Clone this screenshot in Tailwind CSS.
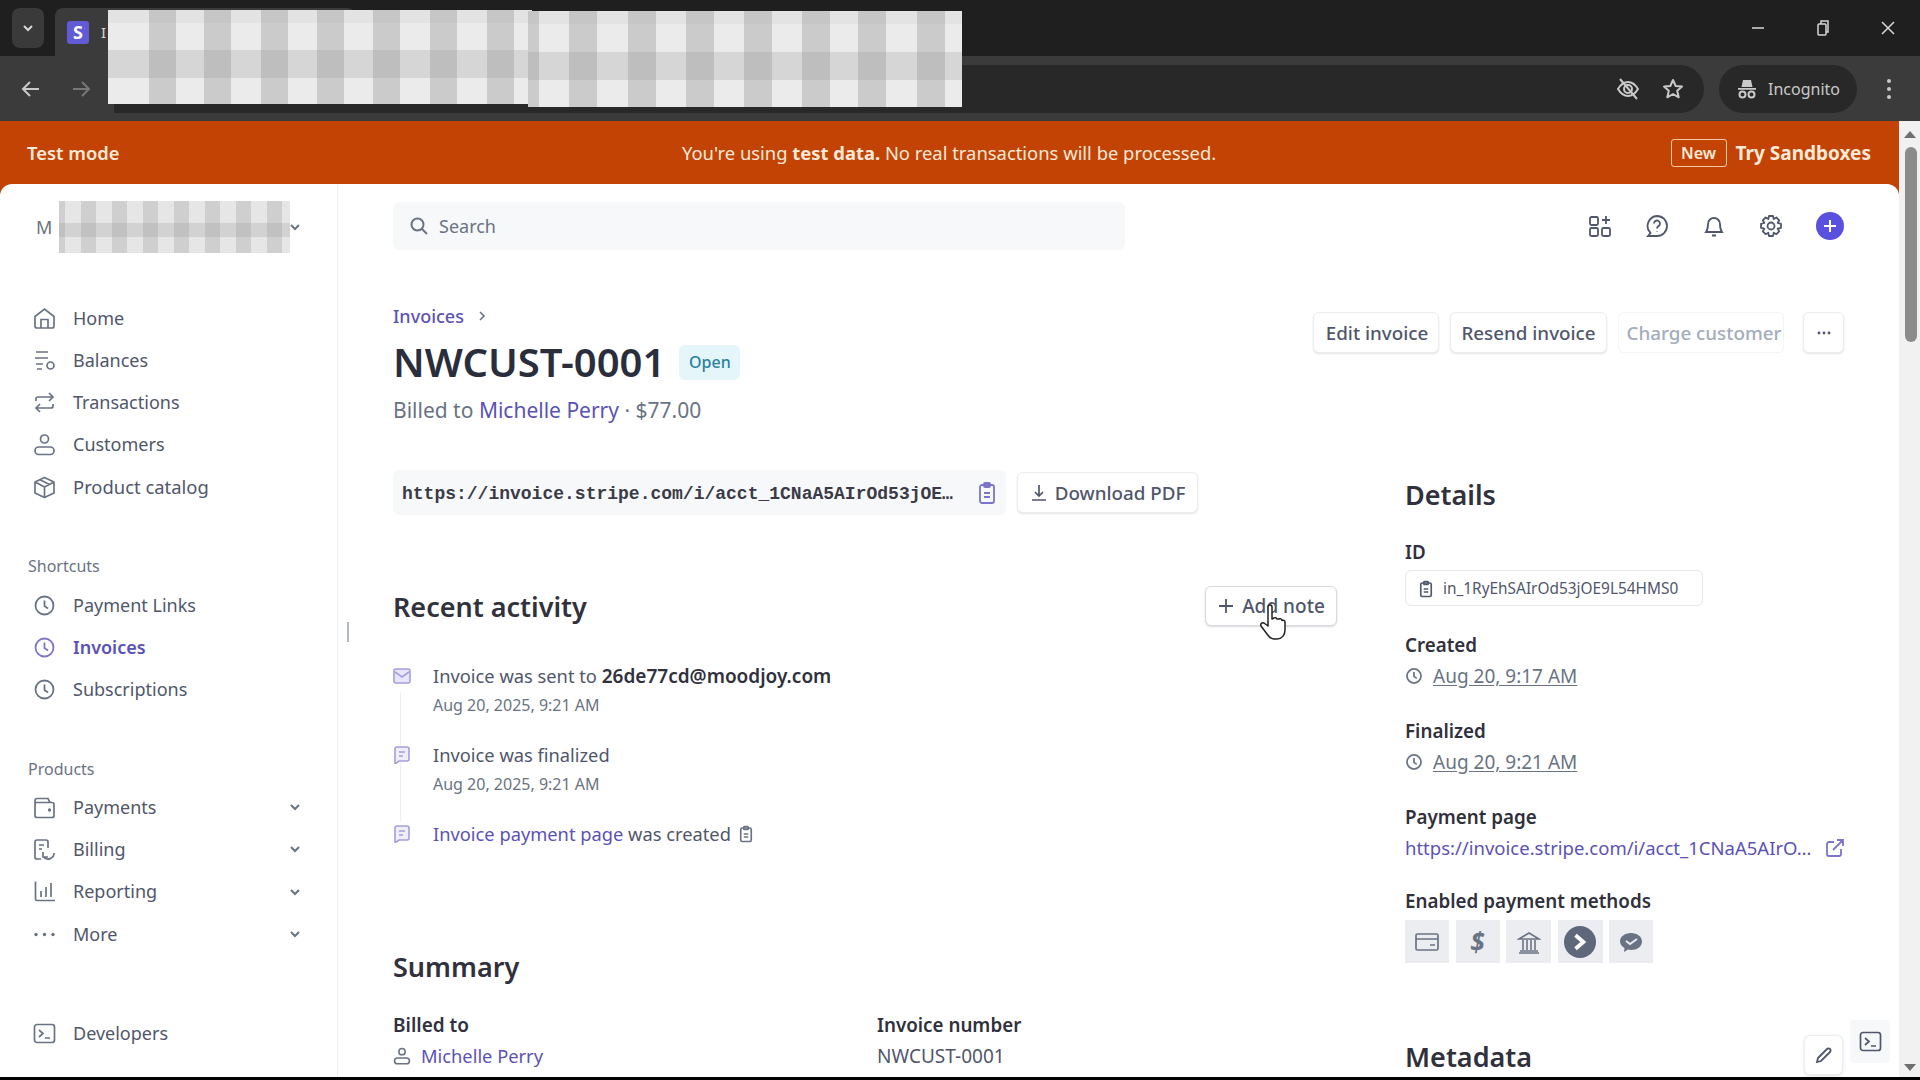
<!doctype html>
<html lang="en">
<head>
<meta charset="UTF-8" />
<title>Invoice NWCUST-0001</title>
<script src="https://cdn.jsdelivr.net/npm/@tailwindcss/browser@4"></script>
</head>
<body class="relative h-screen w-[1920px] overflow-hidden bg-black font-['Noto_Sans','Open_Sans',sans-serif] text-[18px] text-[#50566b]">

<!-- browser chrome -->
<div class="flex h-14 items-center bg-[#1f1f1f] pl-[12px] pr-[24px] text-[#d8d8d8]">
  <div class="flex h-10 w-8 items-center justify-center rounded-lg bg-[#3a3a3a]">
    <svg class="h-3 w-3" viewBox="0 0 12 12" fill="none" stroke="currentColor" stroke-width="2"><path d="M2 4l4 4 4-4"/></svg>
  </div>
  <div class="ml-[11px] flex h-12 w-[300px] items-center self-end rounded-t-lg bg-[#3b3b3b] pl-3">
    <div class="flex h-[23px] w-[22px] items-center justify-center rounded-[3px] bg-[#635bd6] text-[18px] font-bold leading-none text-white">S</div>
    <span class="ml-3 text-[15px] text-[#d8d8d8]">I</span>
  </div>
  <div class="ml-auto flex items-center gap-[47px]">
    <svg class="h-4 w-4" viewBox="0 0 16 16" stroke="currentColor" stroke-width="1.5"><path d="M2 8h12"/></svg>
    <svg class="h-5 w-5" viewBox="0 0 20 20" fill="none" stroke="currentColor" stroke-width="1.5"><rect x="5" y="6" width="8" height="11" rx="1"/><path d="M8 6V3h7v11h-2"/></svg>
    <svg class="h-4 w-4" viewBox="0 0 16 16" stroke="currentColor" stroke-width="1.5"><path d="M2 2l12 12M14 2L2 14"/></svg>
  </div>
</div>
<div class="flex h-[65px] items-center bg-[#3b3b3b] pl-[20px] pr-[20px] text-[#c9c9c9]">
  <svg class="h-[22px] w-[22px]" viewBox="0 0 22 22" fill="none" stroke="currentColor" stroke-width="2"><path d="M19 11H4M10 4l-7 7 7 7"/></svg>
  <svg class="ml-[28px] h-[22px] w-[22px] text-[#777]" viewBox="0 0 22 22" fill="none" stroke="currentColor" stroke-width="2"><path d="M3 11h15M12 4l7 7-7 7"/></svg>
  <div class="ml-[22px] flex h-12 w-[1590px] items-center justify-end gap-[20px] rounded-r-3xl bg-[#282828] pr-[19px]">
    <svg class="h-[26px] w-[26px]" viewBox="0 0 26 26" fill="none" stroke="currentColor" stroke-width="2"><path d="M3 13c3-5 6-7 10-7s7 2 10 7c-3 5-6 7-10 7s-7-2-10-7z"/><circle cx="13" cy="13" r="4"/><path d="M5 3l17 20"/></svg>
    <svg class="h-6 w-6" viewBox="0 0 24 24" fill="none" stroke="currentColor" stroke-width="2" stroke-linejoin="round"><path d="M12 3l2.7 6 6.3.6-4.8 4.2 1.5 6.5L12 17l-5.7 3.3 1.5-6.5L3 9.6 9.3 9z"/></svg>
  </div>
  <div class="ml-[15px] flex h-12 w-[138px] items-center justify-center gap-[10px] rounded-3xl bg-[#282828] text-[16px]">
    <svg class="h-[22px] w-[22px]" viewBox="0 0 22 22" fill="currentColor"><path d="M7 2h8l1.500 7h-11zM2 10h18v1.800H2z"/><circle cx="6.500" cy="16.500" r="3" fill="none" stroke="currentColor" stroke-width="2"/><circle cx="15.500" cy="16.500" r="3" fill="none" stroke="currentColor" stroke-width="2"/></svg>
    <span>Incognito</span>
  </div>
  <svg class="ml-[29px] h-6 w-[6px]" viewBox="0 0 6 24" fill="currentColor"><circle cx="3" cy="4" r="2"/><circle cx="3" cy="12" r="2"/><circle cx="3" cy="20" r="2"/></svg>
</div>

<!-- test mode banner -->
<div class="relative flex h-[63px] items-center bg-[#c24303] px-[27px] pt-px text-[18.400px] text-[#fde9d9]">
  <span class="font-semibold">Test mode</span>
  <p class="absolute left-[682px] top-[19px] leading-[26px]">You're using <b class="font-bold">test data.</b> No real transactions will be processed.</p>
  <div class="ml-auto flex items-center pr-[22px]">
    <span class="flex h-7 w-[56px] items-center justify-center rounded-[3px] border border-[#fbc9a3] text-[16px] font-semibold">New</span>
    <span class="ml-[9px] text-[19px] font-bold">Try Sandboxes</span>
  </div>
</div>

<div class="flex h-[893px]">
  <!-- dashboard -->
  <div class="relative flex h-full w-[1899px] overflow-hidden bg-white">
    <aside class="w-[338px] shrink-0 border-r border-[#f0f1f4] pl-[28px] pr-[36px]">
      <div class="mt-[17px] flex h-[52px] items-center justify-between text-[#6a7383]">
        <span class="ml-[8px] text-[18px]">M</span>
        <svg class="h-3 w-3" viewBox="0 0 12 12" fill="none" stroke="currentColor" stroke-width="2"><path d="M2 4l4 4 4-4"/></svg>
      </div>
      <nav class="mt-[53px] flex flex-col gap-[18.300px]">
        <a class="flex h-6 items-center gap-[17px]">
          <svg class="ml-[5px] h-[23px] w-[23px] shrink-0 text-[#6a7383]" viewBox="0 0 23 23" fill="none" stroke="currentColor" stroke-width="1.700"><path d="M2 9.500L11.500 2 21 9.500V19a2 2 0 0 1-2 2H4a2 2 0 0 1-2-2z"/><path d="M8 21v-8.500h7V21"/></svg>
          <span>Home</span>
        </a>
        <a class="flex h-6 items-center gap-[17px]">
          <svg class="ml-[5px] h-[23px] w-[23px] shrink-0 text-[#6a7383]" viewBox="0 0 23 23" fill="none" stroke="currentColor" stroke-width="1.700"><path d="M3 3h12M2 9h13M3 15h7M4 20h5"/><circle cx="17.500" cy="16.500" r="3.500"/></svg>
          <span>Balances</span>
        </a>
        <a class="flex h-6 items-center gap-[17px]">
          <svg class="ml-[5px] h-[23px] w-[23px] shrink-0 text-[#6a7383]" viewBox="0 0 23 23" fill="none" stroke="currentColor" stroke-width="1.700"><path d="M3 10V8a2 2 0 0 1 2-2h15M16 2l4 4-4 4M20 13v2a2 2 0 0 1-2 2H3M7 13l-4 4 4 4"/></svg>
          <span>Transactions</span>
        </a>
        <a class="flex h-6 items-center gap-[17px]">
          <svg class="ml-[5px] h-[23px] w-[23px] shrink-0 text-[#6a7383]" viewBox="0 0 23 23" fill="none" stroke="currentColor" stroke-width="1.700"><circle cx="11.500" cy="6" r="4"/><rect x="2" y="14" width="19" height="7.500" rx="3.700"/></svg>
          <span>Customers</span>
        </a>
        <a class="flex h-6 items-center gap-[17px]">
          <svg class="ml-[5px] h-[23px] w-[23px] shrink-0 text-[#6a7383]" viewBox="0 0 23 23" fill="none" stroke="currentColor" stroke-width="1.700" stroke-linejoin="round"><path d="M11.500 1.500l9.500 4.500v11l-9.500 4.500L2 17V6zM2 6l9.500 5 9.500-5M11.500 11v10.500M7 3.800l9.500 4.800"/></svg>
          <span class="text-[18.400px]">Product catalog</span>
        </a>
      </nav>
      <div class="mt-[55px] h-6 text-[16px] leading-6 text-[#6a7383]">Shortcuts</div>
      <nav class="mt-[15px] flex flex-col gap-[18px]">
        <a class="flex h-6 items-center gap-[17px]">
          <svg class="ml-[5px] h-[23px] w-[23px] shrink-0 text-[#6a7383]" viewBox="0 0 23 23" fill="none" stroke="currentColor" stroke-width="1.800"><circle cx="11.500" cy="11.500" r="9"/><path d="M11.500 6.500v5.500l3.500 2.500"/></svg>
          <span>Payment Links</span>
        </a>
        <a class="flex h-6 items-center gap-[17px] font-semibold text-[#5b52b6]">
          <svg class="ml-[5px] h-[23px] w-[23px] shrink-0 text-[#7d74c9]" viewBox="0 0 23 23" fill="none" stroke="currentColor" stroke-width="1.800"><circle cx="11.500" cy="11.500" r="9"/><path d="M11.500 6.500v5.500l3.500 2.500"/></svg>
          <span>Invoices</span>
        </a>
        <a class="flex h-6 items-center gap-[17px]">
          <svg class="ml-[5px] h-[23px] w-[23px] shrink-0 text-[#6a7383]" viewBox="0 0 23 23" fill="none" stroke="currentColor" stroke-width="1.800"><circle cx="11.500" cy="11.500" r="9"/><path d="M11.500 6.500v5.500l3.500 2.500"/></svg>
          <span>Subscriptions</span>
        </a>
      </nav>
      <div class="mt-[56px] h-6 text-[16px] leading-6 text-[#6a7383]">Products</div>
      <nav class="mt-[14px] flex flex-col gap-[18.300px]">
        <a class="flex h-6 items-center gap-[17px]">
          <svg class="ml-[5px] h-[23px] w-[23px] shrink-0 text-[#6a7383]" viewBox="0 0 23 23" fill="none" stroke="currentColor" stroke-width="1.700"><path d="M2 7V4.500A2 2 0 0 1 4 2.500h11l2 4"/><rect x="2" y="6.500" width="19" height="15" rx="2"/><circle cx="16.500" cy="14" r=".8" fill="currentColor"/></svg>
          <span>Payments</span>
          <svg class="ml-auto h-3 w-3 shrink-0 text-[#6a7383]" viewBox="0 0 12 12" fill="none" stroke="currentColor" stroke-width="2"><path d="M2 4l4 4 4-4"/></svg>
        </a>
        <a class="flex h-6 items-center gap-[17px]">
          <svg class="ml-[5px] h-[23px] w-[23px] shrink-0 text-[#6a7383]" viewBox="0 0 23 23" fill="none" stroke="currentColor" stroke-width="1.700"><path d="M8 21H4a2 2 0 0 1-2-2V4a2 2 0 0 1 2-2h9a2 2 0 0 1 2 2v6M6 7h5M6 11h3"/><path d="M21 15a6 6 0 0 1-10.500 4M10 14v5h5"/></svg>
          <span>Billing</span>
          <svg class="ml-auto h-3 w-3 shrink-0 text-[#6a7383]" viewBox="0 0 12 12" fill="none" stroke="currentColor" stroke-width="2"><path d="M2 4l4 4 4-4"/></svg>
        </a>
        <a class="flex h-6 items-center gap-[17px]">
          <svg class="ml-[5px] h-[23px] w-[23px] shrink-0 text-[#6a7383]" viewBox="0 0 23 23" fill="none" stroke="currentColor" stroke-width="1.700"><path d="M2.500 1.500V19a1.500 1.500 0 0 0 1.500 1.500h18M8 11v6M13 7v10M18 3v14"/></svg>
          <span>Reporting</span>
          <svg class="ml-auto h-3 w-3 shrink-0 text-[#6a7383]" viewBox="0 0 12 12" fill="none" stroke="currentColor" stroke-width="2"><path d="M2 4l4 4 4-4"/></svg>
        </a>
        <a class="flex h-6 items-center gap-[17px]">
          <svg class="ml-[5px] h-[23px] w-[23px] shrink-0 text-[#6a7383]" viewBox="0 0 23 23" fill="currentColor"><circle cx="3" cy="11.500" r="1.700"/><circle cx="11.500" cy="11.500" r="1.700"/><circle cx="20" cy="11.500" r="1.700"/></svg>
          <span>More</span>
          <svg class="ml-auto h-3 w-3 shrink-0 text-[#6a7383]" viewBox="0 0 12 12" fill="none" stroke="currentColor" stroke-width="2"><path d="M2 4l4 4 4-4"/></svg>
        </a>
      </nav>
      <a class="mt-[75px] flex h-6 items-center gap-[17px]">
        <svg class="ml-[5px] h-[23px] w-[23px] shrink-0 text-[#6a7383]" viewBox="0 0 23 23" fill="none" stroke="currentColor" stroke-width="1.700"><rect x="1.500" y="2.500" width="20" height="18" rx="2.500"/><path d="M6 8l4 3.500-4 3.500M12 16h5"/></svg>
        <span>Developers</span>
      </a>
    </aside>

    <main class="min-w-0 flex-1 pl-[55px] pr-[55px]">
      <!-- top bar -->
      <div class="mt-[18px] flex h-12 items-center justify-between">
        <div class="flex h-12 w-[732px] items-center gap-[10px] rounded-md bg-[#f7f8fa] pl-[16px] text-[#6a7383]">
          <svg class="h-[20px] w-[20px]" viewBox="0 0 20 20" fill="none" stroke="currentColor" stroke-width="2"><circle cx="8.500" cy="8.500" r="6"/><path d="M13 13l5 5"/></svg>
          <span>Search</span>
        </div>
        <div class="flex items-center gap-[33px] text-[#50566b]">
          <svg class="h-6 w-6" viewBox="0 0 24 24" fill="none" stroke="currentColor" stroke-width="1.800"><rect x="2" y="3" width="8" height="8" rx="1.500"/><rect x="2" y="14" width="8" height="8" rx="1.500"/><rect x="14" y="14" width="8" height="8" rx="1.500"/><path d="M18 2v8M14 6h8"/></svg>
          <svg class="h-6 w-6" viewBox="0 0 24 24" fill="none" stroke="currentColor" stroke-width="1.800"><path d="M12 2a10 10 0 0 1 0 20H3l2.500-3A10 10 0 0 1 12 2z"/><path d="M9 9.500a3 3 0 1 1 4.500 2.600c-1 .6-1.500 1.200-1.500 2.400M12 17.500v.5"/></svg>
          <svg class="h-6 w-6" viewBox="0 0 24 24" fill="none" stroke="currentColor" stroke-width="1.800"><path d="M4 18c1.500-2 2-3 2-8a6 6 0 0 1 12 0c0 5 .5 6 2 8zM10 21.500h4"/></svg>
          <svg class="h-6 w-6" viewBox="0 0 24 24" fill="none" stroke="currentColor" stroke-width="1.800" stroke-linejoin="round"><circle cx="12" cy="12" r="3.500"/><path d="M10 2h4l.7 3 2.700-1.500 2.800 2.800L18.700 9l3.300.8v4l-3.300.9 1.500 2.700-2.800 2.800-2.700-1.500-.7 3.300h-4l-.7-3.300-2.700 1.500-2.800-2.800L5.300 14.700 2 13.800v-4l3.300-.8-1.500-2.700 2.800-2.800L9.300 5z"/></svg>
          <div class="flex h-7 w-7 items-center justify-center rounded-full bg-[#5a50e0] text-white">
            <svg class="h-4 w-4" viewBox="0 0 16 16" stroke="currentColor" stroke-width="2"><path d="M8 2v12M2 8h12"/></svg>
          </div>
        </div>
      </div>

      <!-- invoice header -->
      <div class="mt-[54px] flex items-start justify-between">
        <div>
          <div class="flex h-6 items-center gap-3 font-medium text-[#5b52b6]">
            <span>Invoices</span>
            <svg class="h-3 w-3 text-[#6a7383]" viewBox="0 0 12 12" fill="none" stroke="currentColor" stroke-width="1.600"><path d="M4 2l4 4-4 4"/></svg>
          </div>
          <div class="mt-3 flex h-11 items-center gap-[14px]">
            <h1 class="text-[40px] font-semibold leading-none text-[#2a2e3c]">NWCUST-0001</h1>
            <span class="flex h-[35px] w-[61px] items-center justify-center rounded-md bg-[#e5f6fb] text-[16px] font-medium text-[#2b7f9e]">Open</span>
          </div>
          <p class="mt-[14px] h-6 text-[21px] leading-6 text-[#6a7383]">Billed to <span class="text-[#5b52b6]">Michelle Perry</span> · $77.00</p>
        </div>
        <div class="mt-2 flex items-center gap-[11px] text-[18.800px] font-medium">
          <button class="h-[41px] w-[126px] rounded-md border border-[#ebeef1] bg-white pl-[2px] pt-[2px] shadow-[0_1px_2px_rgba(0,0,0,0.12)]">Edit invoice</button>
          <button class="h-[41px] w-[157px] rounded-md border border-[#ebeef1] bg-white pt-[2px] shadow-[0_1px_2px_rgba(0,0,0,0.12)]">Resend invoice</button>
          <button class="h-[41px] w-[166px] rounded-md border border-[#f3f4f6] bg-white pl-[6px] pt-[2px] text-[#a3acba]">Charge customer</button>
          <button class="ml-[8px] flex h-[41px] w-[41px] items-center justify-center rounded-md border border-[#ebeef1] bg-white shadow-[0_1px_2px_rgba(0,0,0,0.12)]">
            <svg class="h-4 w-4" viewBox="0 0 16 16" fill="currentColor"><circle cx="3" cy="8" r="1.400"/><circle cx="8" cy="8" r="1.400"/><circle cx="13" cy="8" r="1.400"/></svg>
          </button>
        </div>
      </div>

      <div class="mt-12 flex">
        <!-- left column -->
        <section class="w-[944px] shrink-0">
          <div class="flex items-center">
            <div class="flex h-[45px] w-[613px] items-center justify-between rounded-md bg-[#f7f8fa] pl-[9px] pr-[7px]">
              <span class="pt-[2px] font-['Liberation_Mono',monospace] text-[18px] font-bold leading-none text-[#3a3b47]">https://invoice.stripe.com/i/acct_1CNaA5AIrOd53jOE…</span>
              <svg class="h-6 w-6 shrink-0 text-[#7d74c9]" viewBox="0 0 24 24" fill="none" stroke="currentColor" stroke-width="1.800"><rect x="5" y="4" width="14" height="18" rx="2"/><rect x="9" y="2" width="6" height="4" rx="1"/><path d="M9 12h6M9 16h6"/></svg>
            </div>
            <button class="ml-[11px] flex h-[41px] w-[181px] items-center justify-center gap-[7px] rounded-md border border-[#ebeef1] bg-white pt-px text-[18.800px] font-medium shadow-[0_1px_2px_rgba(0,0,0,0.12)]">
              <svg class="h-[18px] w-[18px]" viewBox="0 0 18 18" fill="none" stroke="currentColor" stroke-width="1.700"><path d="M9 1v10M5 8l4 4 4-4M2 16h14"/></svg>
              Download PDF
            </button>
          </div>

          <div class="mt-[71px] flex h-10 items-center justify-between">
            <h2 class="pt-[2px] text-[27px] font-semibold text-[#30313d]">Recent activity</h2>
            <button class="flex h-10 w-[132px] items-center justify-center gap-[7px] rounded-md border border-[#d5dbe1] bg-white text-[19px] font-medium shadow-[0_1px_2px_rgba(0,0,0,0.15)]">
              <svg class="h-[18px] w-[18px]" viewBox="0 0 18 18" stroke="currentColor" stroke-width="1.800"><path d="M9 2v14M2 9h14"/></svg>
              Add note
            </button>
          </div>

          <div class="relative mt-[38px] pl-[40px] text-[18.300px]">
            <div class="absolute left-[7px] top-[28px] h-[130px] w-px bg-[#eef0f4]"></div>
            <div class="h-6 leading-6">Invoice was sent to <b class="text-[19px] font-semibold text-[#30313d]">26de77cd@moodjoy.com</b></div>
            <svg class="absolute left-0 top-[3px] h-[18px] w-[18px] text-[#a49fdc]" viewBox="0 0 18 18" fill="none" stroke="currentColor" stroke-width="1.600"><rect x="1" y="2" width="16" height="14" rx="2" fill="#e8e6f8"/><path d="M2 5l7 5 7-5"/></svg>
            <div class="mt-[5px] h-6 text-[16px] leading-6 text-[#6a7383]">Aug 20, 2025, 9:21 AM</div>
            <div class="mt-[26px] h-6 leading-6">Invoice was finalized</div>
            <svg class="absolute left-0 top-[82px] h-[18px] w-[18px] text-[#a49fdc]" viewBox="0 0 18 18" fill="none" stroke="currentColor" stroke-width="1.600"><path d="M2 3a2 2 0 0 1 2-2h10a2 2 0 0 1 2 2v10a2 2 0 0 1-2 2H6l-4 3z" fill="#f0eefb"/><path d="M6 6h6M6 10h4"/></svg>
            <div class="mt-[5px] h-6 text-[16px] leading-6 text-[#6a7383]">Aug 20, 2025, 9:21 AM</div>
            <div class="mt-[26px] flex h-6 items-center gap-[6px] leading-6"><span><span class="text-[#5b52b6]">Invoice payment page</span> was created</span>
              <svg class="h-[18px] w-[18px] text-[#6a7383]" viewBox="0 0 24 24" fill="none" stroke="currentColor" stroke-width="2.200"><rect x="5" y="4" width="14" height="18" rx="2"/><rect x="9" y="2" width="6" height="4" rx="1"/><path d="M9 12h6M9 16h6"/></svg>
            </div>
            <svg class="absolute left-0 top-[161px] h-[18px] w-[18px] text-[#a49fdc]" viewBox="0 0 18 18" fill="none" stroke="currentColor" stroke-width="1.600"><path d="M2 3a2 2 0 0 1 2-2h10a2 2 0 0 1 2 2v10a2 2 0 0 1-2 2H6l-4 3z" fill="#f0eefb"/><path d="M6 6h6M6 10h4"/></svg>
          </div>

          <h2 class="mt-[103px] h-9 text-[27px] font-semibold leading-9 text-[#30313d]">Summary</h2>
          <div class="mt-[28px] flex">
            <div class="w-[484px]">
              <div class="h-6 text-[19px] font-semibold leading-6 text-[#30313d]">Billed to</div>
              <div class="mt-[7px] flex h-6 items-center gap-[10px] text-[18.300px] text-[#5b52b6]">
                <svg class="h-[18px] w-[18px] text-[#6a7383]" viewBox="0 0 23 23" fill="none" stroke="currentColor" stroke-width="2"><circle cx="11.500" cy="6" r="4"/><rect x="2" y="14" width="19" height="7.500" rx="3.700"/></svg>
                Michelle Perry
              </div>
            </div>
            <div>
              <div class="h-6 text-[18.800px] font-semibold leading-6 text-[#30313d]">Invoice number</div>
              <div class="mt-[7px] h-6 text-[19px] leading-6">NWCUST-0001</div>
            </div>
          </div>
        </section>

        <!-- details -->
        <section class="ml-[68px] min-w-0 flex-1">
          <h2 class="mt-[7px] h-9 text-[27px] font-semibold leading-9 text-[#30313d]">Details</h2>
          <div class="mt-[27px] h-6 text-[18.800px] font-semibold leading-6 text-[#30313d]">ID</div>
          <div class="mt-[6px] flex h-9 w-[298px] items-center gap-[8px] rounded-md border border-[#e3e6eb] pl-[11px] pt-px text-[15.400px]">
            <svg class="h-[18px] w-[18px]" viewBox="0 0 24 24" fill="none" stroke="currentColor" stroke-width="2.200"><rect x="5" y="4" width="14" height="18" rx="2"/><rect x="9" y="2" width="6" height="4" rx="1"/><path d="M9 12h6M9 16h6"/></svg>
            in_1RyEhSAIrOd53jOE9L54HMS0
          </div>
          <div class="mt-[27px] h-6 text-[18.800px] font-semibold leading-6 text-[#30313d]">Created</div>
          <div class="mt-[7px] flex h-6 items-center gap-[10px] text-[19px] text-[#6a7383]">
            <svg class="h-[18px] w-[18px]" viewBox="0 0 23 23" fill="none" stroke="currentColor" stroke-width="2.200"><circle cx="11.500" cy="11.500" r="9"/><path d="M11.500 6.500v5.500l3.500 2.500"/></svg>
            <span class="underline underline-offset-2">Aug 20, 9:17 AM</span>
          </div>
          <div class="mt-[31px] h-6 text-[18.800px] font-semibold leading-6 text-[#30313d]">Finalized</div>
          <div class="mt-[7px] flex h-6 items-center gap-[10px] text-[19px] text-[#6a7383]">
            <svg class="h-[18px] w-[18px]" viewBox="0 0 23 23" fill="none" stroke="currentColor" stroke-width="2.200"><circle cx="11.500" cy="11.500" r="9"/><path d="M11.500 6.500v5.500l3.500 2.500"/></svg>
            <span class="underline underline-offset-2">Aug 20, 9:21 AM</span>
          </div>
          <div class="mt-[31px] h-6 text-[18.800px] font-semibold leading-6 text-[#30313d]">Payment page</div>
          <div class="mt-[7px] flex h-6 items-center justify-between text-[18.500px] text-[#5b52b6]">
            <span>https://invoice.stripe.com/i/acct_1CNaA5AIrO…</span>
            <svg class="h-[18px] w-[18px] text-[#7d74c9]" viewBox="0 0 18 18" fill="none" stroke="currentColor" stroke-width="1.800"><path d="M8 3H3a2 2 0 0 0-2 2v10a2 2 0 0 0 2 2h10a2 2 0 0 0 2-2v-5M7 11L17 1M11 1h6v6"/></svg>
          </div>
          <div class="mt-[29px] h-6 text-[18.800px] font-semibold leading-6 text-[#30313d]">Enabled payment methods</div>
          <div class="mt-[7px] flex gap-[6.500px] text-[#6a7383]">
            <div class="flex h-[43px] w-[44px] items-center justify-center bg-[#ebedf1]">
              <svg class="h-[22px] w-[24px]" viewBox="0 0 24 22" fill="none" stroke="currentColor" stroke-width="1.700"><rect x="1" y="3" width="22" height="16" rx="1.500"/><path d="M1 8h22M15 14h5"/></svg>
            </div>
            <div class="flex h-[43px] w-[44px] items-center justify-center bg-[#ebedf1] text-[26px] font-bold italic leading-none">$</div>
            <div class="flex h-[43px] w-[45px] items-center justify-center bg-[#ebedf1]">
              <svg class="h-6 w-6" viewBox="0 0 24 24" fill="none" stroke="currentColor" stroke-width="1.600"><path d="M2 9l10-6 10 6zM3 21h18M2 23h20M6 10v10M10 10v10M14 10v10M18 10v10"/></svg>
            </div>
            <div class="flex h-[43px] w-[45px] items-center justify-center bg-[#ebedf1]">
              <div class="flex h-8 w-8 items-center justify-center rounded-full bg-[#5f677a] text-white">
                <svg class="h-[18px] w-[18px]" viewBox="0 0 16 16" fill="none" stroke="currentColor" stroke-width="3.400"><path d="M4 2l7 6-7 6"/></svg>
              </div>
            </div>
            <div class="flex h-[43px] w-[44px] items-center justify-center bg-[#ebedf1]">
              <svg class="h-[24px] w-[24px]" viewBox="0 0 24 24"><path fill="#6a7383" d="M12 3c6 0 11 3.500 11 8.500S18 20 12 20c-1 0-2-.1-3-.4L5 22l.5-4C3 16.500 1 14 1 11.500 1 6.500 6 3 12 3z"/><path fill="none" stroke="#ebedf1" stroke-width="2" d="M7 11l4 3 7-5"/></svg>
            </div>
          </div>
          <h2 class="mt-[76px] h-9 text-[27px] font-semibold leading-9 text-[#30313d]">Metadata</h2>
        </section>
      </div>
    </main>

    <!-- sidebar resize handle -->
    <div class="absolute left-[347px] top-[438px] h-[20px] w-[2px] bg-[#b5b9c2]"></div>

    <!-- floating buttons -->
    <div class="absolute left-[1804px] top-[851px] flex h-10 w-[39px] items-center justify-center rounded-md border border-[#eceef1] bg-white shadow-[0_1px_3px_rgba(0,0,0,0.12)]">
      <svg class="h-[18px] w-[18px]" viewBox="0 0 18 18" fill="none" stroke="currentColor" stroke-width="1.800"><path d="M3 12L12 3a2 2 0 0 1 3 3l-9 9-4 1z"/></svg>
    </div>
    <div class="absolute left-[1850px] top-[836px] flex h-[43px] w-10 items-center justify-center rounded bg-[#f7f8fa]">
      <svg class="h-[23px] w-[23px]" viewBox="0 0 23 23" fill="none" stroke="currentColor" stroke-width="1.700"><rect x="1.500" y="2.500" width="20" height="18" rx="2.500"/><path d="M6 8l4 3.500-4 3.500M12 16h5"/></svg>
    </div>
  </div>

  <!-- scrollbar -->
  <div class="w-[21px] bg-[#f1f1f1]"></div>
</div>

<!-- window corners of the dashboard -->
<div class="absolute left-0 top-[184px] h-3 w-3 bg-[#c24303]"><div class="h-3 w-3 rounded-tl-xl bg-white"></div></div>
<div class="absolute left-[1887px] top-[184px] h-3 w-3 bg-[#c24303]"><div class="h-3 w-3 rounded-tr-xl bg-white"></div></div>
<div class="absolute left-[1899px] top-[121px] flex h-[63px] w-[21px] justify-center bg-[#f1f1f1] pt-[10px]">
  <div class="h-0 w-0 border-x-[6px] border-b-[7px] border-x-transparent border-b-[#6f6f6f]"></div>
</div>
<div class="absolute left-[1905px] top-[147px] h-[195px] w-[12px] rounded-full bg-[#8b8b8b]"></div>
<div class="absolute left-[1904px] top-[1064px] h-0 w-0 border-x-[6px] border-t-[7px] border-x-transparent border-t-[#6f6f6f]"></div>

<!-- blurred-out regions of the recording -->
<div class="absolute left-[108px] top-[10px] h-[94px] w-[424px] bg-[linear-gradient(90deg,#ebebeb_0_41px,#cbcbcb_41px_68px,#ebebeb_68px_96px,#cbcbcb_96px_123px,#ebebeb_123px_153px,#cbcbcb_153px_180px,#ebebeb_180px_209px,#cbcbcb_209px_236px,#ebebeb_236px_265px,#cbcbcb_265px_292px,#ebebeb_292px_322px,#cbcbcb_322px_349px,#ebebeb_349px_379px,#cbcbcb_379px_406px,#ebebeb_406px)]">
  <div class="h-[13px] bg-[#999]/10"></div>
  <div class="mt-[27px] h-[28px] bg-[#999]/25"></div>
</div>
<div class="absolute left-[528px] top-[11px] h-[96px] w-[434px] bg-[linear-gradient(90deg,#cbcbcb_0_11px,#ebebeb_11px_41px,#cbcbcb_41px_69px,#ebebeb_69px_100px,#cbcbcb_100px_128px,#ebebeb_128px_158px,#cbcbcb_158px_186px,#ebebeb_186px_216px,#cbcbcb_216px_244px,#ebebeb_244px_274px,#cbcbcb_274px_302px,#ebebeb_302px_330px,#cbcbcb_330px_358px,#ebebeb_358px_389px,#cbcbcb_389px_417px,#ebebeb_417px)]">
  <div class="h-[13px] bg-[#999]/10"></div>
  <div class="mt-[28px] h-[28px] bg-[#999]/25"></div>
</div>
<div class="absolute left-[59px] top-[201px] h-[52px] w-[231px] bg-[repeating-linear-gradient(90deg,#cfcfcf_0_6px,#e6e6e6_6px_22px,#cfcfcf_22px_31px)]">
  <div class="mt-[22px] h-[14px] bg-[#999]/25"></div>
</div>

<!-- mouse cursor -->
<svg class="absolute left-[1259px] top-[604px] h-[38px] w-[28px]" viewBox="0 0 28 38" fill="#fff" stroke="#222" stroke-width="1.500" stroke-linejoin="round"><path d="M9 3a2 2 0 0 1 4 0v12l2-1a2 2 0 0 1 3 1l2 0a2 2 0 0 1 3 1.500 2 2 0 0 1 3 1.500v8c0 5-3 9-8 9h-3c-3 0-5-2-7-5L2 22c-1-2 1-4 3-3l4 3z"/></svg>

</body>
</html>
